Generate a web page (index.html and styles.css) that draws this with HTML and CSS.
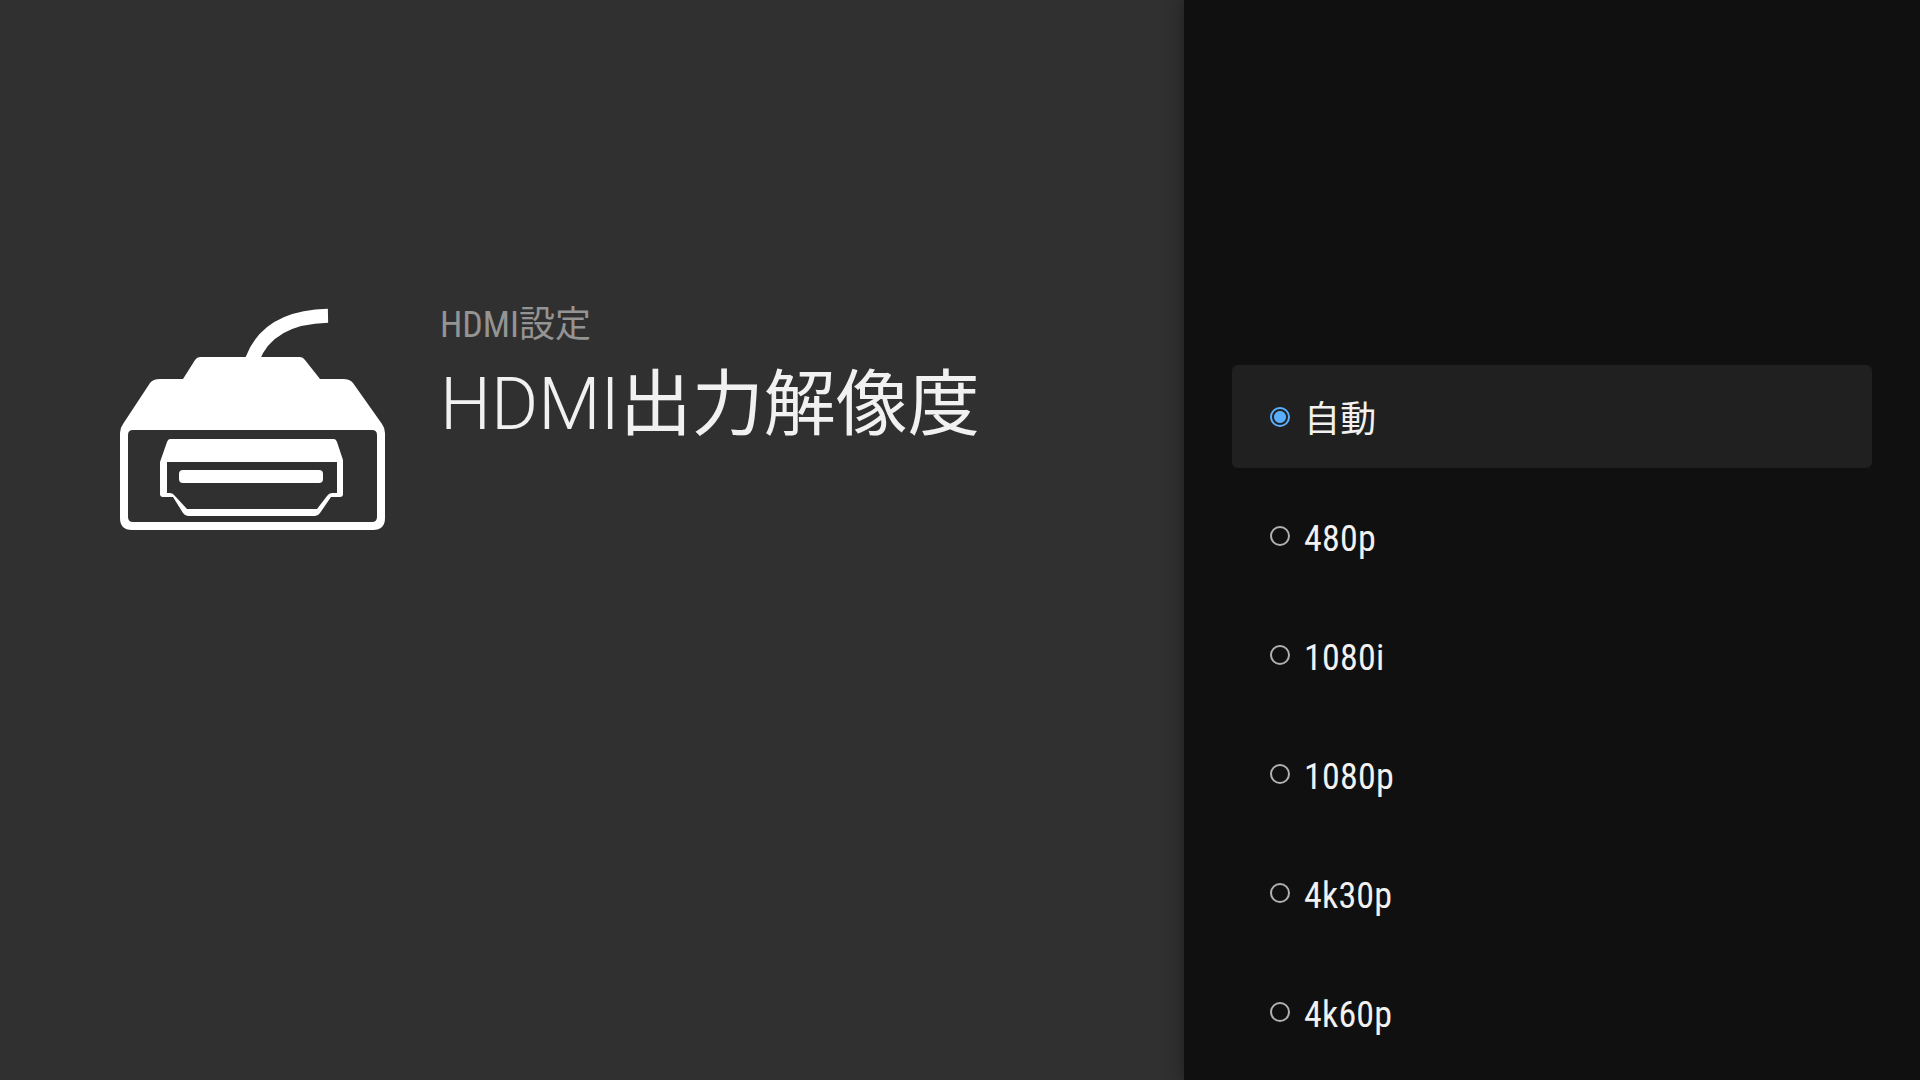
FILE: index.html
```html
<!DOCTYPE html>
<html lang="ja">
<head>
  <meta charset="UTF-8">
  <title>HDMI出力解像度</title>
  <link rel="stylesheet" href="styles.css">
</head>
<body>

  <div class="info-panel">
    <svg class="hdmi-icon" width="300" height="260" viewBox="0 0 300 260">
      <path class="cable" d="M152 70 Q168 27 228 25.7"/>
      <path class="solid" fill-rule="evenodd" d="M100 67 H200 Q203 67 205 70 L220 89 H243 Q250 89 253 93 L282 134 Q285 138 285 143 V228 Q285 240 273 240 H32 Q20 240 20 228 V143 Q20 138 23 134 L50 93 Q53 89 60 89 H83 L95 70 Q97 67 100 67 Z M33 140 Q28 140 28 145 V227 Q28 232 33 232 H272 Q277 232 277 227 V145 Q277 140 272 140 Z"/>
      <path class="solid" fill-rule="evenodd" d="M70 149 H234 Q236 149 237 152 L243 170 V204 Q243 207 240 207 H231 L220 223 Q218 226 215 226 H88 Q85 226 83 223 L73 207 H63 Q60 207 60 204 V172 L67 152 Q68 149 70 149 Z M67 172 V203 H70 Q73 203 75 206 L87 219 H217 L227 206 Q229 203 232 203 H237 V172 Z"/>
      <rect class="solid" x="79" y="180" width="144" height="13" rx="4"/>
    </svg>
    <div class="heading">
      <div class="subtitle">HDMI設定</div>
      <div class="title">HDMI<span class="title-ja">出力解像度</span></div>
    </div>
  </div>

  <div class="option-panel">
    <div class="option selected"><span class="radio"></span><span class="label">自動</span></div>
    <div class="option"><span class="radio"></span><span class="label">480p</span></div>
    <div class="option"><span class="radio"></span><span class="label">1080i</span></div>
    <div class="option"><span class="radio"></span><span class="label">1080p</span></div>
    <div class="option"><span class="radio"></span><span class="label">4k30p</span></div>
    <div class="option"><span class="radio"></span><span class="label">4k60p</span></div>
  </div>

</body>
</html>
```

FILE: styles.css
```css
html, body {
  height: 100%;
}

body {
  margin: 0;
  display: flex;
  overflow: hidden;
  font-family: Roboto, "Noto Sans CJK JP", sans-serif;
  background-color: #101010;
}

.info-panel {
  box-sizing: border-box;
  width: 1184px;
  height: 1080px;
  padding: 290px 0 0 100px;
  display: flex;
  align-items: flex-start;
  background-color: #303030;
}

.hdmi-icon {
  flex: none;
}

.cable {
  fill: none;
  stroke: #fff;
  stroke-width: 14;
}

.solid {
  fill: #fff;
}

.heading {
  margin-left: 40px;
  white-space: nowrap;
}

.subtitle {
  font-size: 36px;
  font-stretch: 75%;
  line-height: 42px;
  margin-top: 14px;
  color: #949494;
}

.title {
  font-size: 72px;
  font-weight: 300;
  line-height: 84px;
  margin-top: 17px;
  color: #f1f1f1;
}

.title-ja {
  font-weight: 400;
}

.option-panel {
  position: relative;
  box-sizing: border-box;
  flex: 1;
  padding: 365px 48px 0;
  display: flex;
  flex-direction: column;
  gap: 16px;
  background-color: #101010;
  box-shadow: 0 0 16px rgba(0, 0, 0, 0.4);
}

.option {
  flex: none;
  height: 103px;
  padding-left: 38px;
  display: flex;
  align-items: center;
  border-radius: 6px;
}

.option.selected {
  background-color: #202020;
}

.radio {
  box-sizing: border-box;
  width: 20px;
  height: 20px;
  border: 2px solid #b0b0b0;
  border-radius: 50%;
}

.selected .radio {
  border-color: #5aaeff;
  background: radial-gradient(circle, #5aaeff 0 5.5px, transparent 6.5px);
}

.label {
  margin-left: 14px;
  margin-top: 7px;
  font-size: 36px;
  font-stretch: 75%;
  letter-spacing: 0.2px;
  line-height: 42px;
  color: #f1f1f1;
}
```
